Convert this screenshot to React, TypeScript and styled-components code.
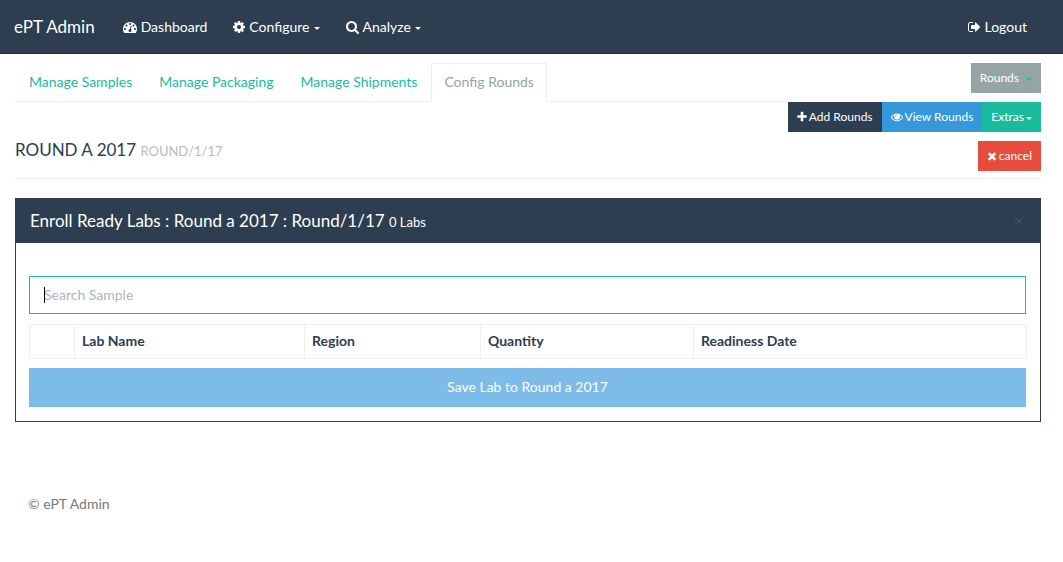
import React from "react";
import styled, { createGlobalStyle } from "styled-components";

const navy = "#2c3e50";
const teal = "#18bc9c";
const line = "#ecf0f1";

const GlobalStyle = createGlobalStyle`
  * { box-sizing: border-box; }
  body {
    margin: 0;
    background: #fff;
    color: ${navy};
    font: 14px/20px Lato, "Liberation Sans", sans-serif;
  }
  button, input { font: inherit; }
`;

const glyphs = {
  dashboard: {
    x: 0, w: 14,
    d: "M384 1152q0-53-37.5-90.5t-90.5-37.5-90.5 37.5-37.5 90.5 37.5 90.5 90.5 37.5 90.5-37.5 37.5-90.5zm192-448q0-53-37.5-90.5t-90.5-37.5-90.5 37.5-37.5 90.5 37.5 90.5 90.5 37.5 90.5-37.5 37.5-90.5zm428 481l101-382q6-26-7.5-48.5t-38.5-29.5-48 6.5-30 39.5l-101 382q-60 5-107 43.5t-63 98.5q-20 77 20 146t117 89 146-20 89-117q16-60-6-117t-72-91zm660-33q0-53-37.5-90.5t-90.5-37.5-90.5 37.5-37.5 90.5 37.5 90.5 90.5 37.5 90.5-37.5 37.5-90.5zm-640-640q0-53-37.5-90.5t-90.5-37.5-90.5 37.5-37.5 90.5 37.5 90.5 90.5 37.5 90.5-37.5 37.5-90.5zm448 192q0-53-37.5-90.5t-90.5-37.5-90.5 37.5-37.5 90.5 37.5 90.5 90.5 37.5 90.5-37.5 37.5-90.5zm320 448q0 261-141 483-19 29-54 29h-1402q-35 0-54-29-141-221-141-483 0-182 71-348t191-286 286-191 348-71 348 71 286 191 191 286 71 348z",
  },
  cog: {
    x: 128, w: 12,
    d: "M1152 896q0-106-75-181t-181-75-181 75-75 181 75 181 181 75 181-75 75-181zm512-109v222q0 12-8 23t-20 13l-185 28q-19 54-39 91 35 50 107 138 10 12 10 25t-9 23q-27 37-99 108t-94 71q-12 0-26-9l-138-108q-44 23-91 38-16 136-29 186-7 28-36 28h-222q-14 0-24.5-8.5t-11.5-21.5l-28-184q-49-16-90-37l-141 107q-10 9-25 9-14 0-25-11-126-114-165-168-7-10-7-23 0-12 8-23 15-21 51-66.5t54-70.5q-27-50-41-99l-183-27q-13-2-21-12.5t-8-23.5v-222q0-12 8-23t19-13l186-28q14-46 39-92-40-57-107-138-10-12-10-24 0-10 9-23 26-36 98.5-107.5t94.5-71.5q13 0 26 10l138 107q44-23 91-38 16-136 29-186 7-28 36-28h222q14 0 24.5 8.5t11.5 21.5l28 184q49 16 90 37l142-107q9-9 24-9 13 0 25 10 129 119 165 170 7 8 7 22 0 12-8 23-15 21-51 66.5t-54 70.5q26 50 41 98l183 28q13 2 21 12.5t8 23.5z",
  },
  search: {
    x: 64, w: 13,
    d: "M1216 832q0-185-131.5-316.5t-316.5-131.5-316.5 131.5-131.5 316.5 131.5 316.5 316.5 131.5 316.5-131.5 131.5-316.5zm512 832q0 52-38 90t-90 38q-54 0-90-38l-343-342q-179 124-399 124-143 0-273.5-55.5t-225-150-150-225-55.5-273.5 55.5-273.5 150-225 225-150 273.5-55.5 273.5 55.5 225 150 150 225 55.5 273.5q0 220-124 399l343 343q37 37 37 90z",
  },
  signOut: {
    x: 64, w: 13,
    d: "M704 1440q0 4 1 20t.5 26.5-3 23.5-10 19.5-20.5 6.5h-320q-119 0-203.5-84.5t-84.5-203.5v-704q0-119 84.5-203.5t203.5-84.5h320q13 0 22.5 9.5t9.5 22.5q0 4 1 20t.5 26.5-3 23.5-10 19.5-20.5 6.5h-320q-66 0-113 47t-47 113v704q0 66 47 113t113 47h312l11.5 1 11.5 3 8 5.5 7 9 2 13.5zm928-544q0 26-19 45l-544 544q-19 19-45 19t-45-19-19-45v-288h-448q-26 0-45-19t-19-45v-384q0-26 19-45t45-19h448v-288q0-26 19-45t45-19 45 19l544 544q19 19 19 45z",
  },
  plus: {
    x: 192, w: 11,
    d: "M1600 736v192q0 40-28 68t-68 28h-416v416q0 40-28 68t-68 28h-192q-40 0-68-28t-28-68v-416h-416q-40 0-68-28t-28-68v-192q0-40 28-68t68-28h416v-416q0-40 28-68t68-28h192q40 0 68 28t28 68v416h416q40 0 68 28t28 68z",
  },
  eye: {
    x: 0, w: 14,
    d: "M1664 960q-152-236-381-353 61 104 61 225 0 185-131.5 316.5t-316.5 131.5-316.5-131.5-131.5-316.5q0-121 61-225-229 117-381 353 133 205 333.5 326.5t434.5 121.5 434.5-121.5 333.5-326.5zm-720-384q0-20-14-34t-34-14q-125 0-214.5 89.5t-89.5 214.5q0 20 14 34t34 14 34-14 14-34q0-86 61-147t147-61q20 0 34-14t14-34zm848 384q0 34-20 69-140 230-376.5 368.5t-499.5 138.5-499.5-139-376.5-368q-20-35-20-69t20-69q140-229 376.5-368t499.5-139 499.5 139 376.5 368q20 35 20 69z",
  },
  times: {
    x: 192, w: 11,
    d: "M1490 1322q0 40-28 68l-136 136q-28 28-68 28t-68-28l-294-294-294 294q-28 28-68 28t-68-28l-136-136q-28-28-28-68t28-68l294-294-294-294q-28-28-28-68t28-68l136-136q28-28 68-28t68 28l294 294 294-294q28-28 68-28t68 28l136 136q28 28 28 68t-28 68l-294 294 294 294q28 28 28 68z",
  },
};

function Glyph({ name, size = 14 }: { name: keyof typeof glyphs; size?: number }) {
  const g = glyphs[name];
  return (
    <svg
      width={Math.ceil((g.w * size) / 14)}
      height={size}
      viewBox={`${g.x} 0 ${g.w * 128} 1792`}
      fill="currentColor"
      aria-hidden="true"
    >
      <path d={g.d} />
    </svg>
  );
}

const Caret = styled.span<{ $color?: string }>`
  border-top: 3px solid ${(p) => p.$color ?? "currentColor"};
  border-left: 3px solid transparent;
  border-right: 3px solid transparent;
  margin-top: 3px;
`;

const Navbar = styled.header`
  display: flex;
  align-items: center;
  height: 54px;
  padding: 0 36px 0 14px;
  background: ${navy};
  border-bottom: 1px solid #202d3b;
  color: #fff;
`;

const Brand = styled.a`
  color: inherit;
  text-decoration: none;
  font-size: 17px;
  margin-right: 28px;
`;

const Menu = styled.nav`
  display: flex;
  flex: 1;
  gap: 26px;
  a:last-child { margin-left: auto; }
`;

const NavLink = styled.a<{ $gap?: number }>`
  display: flex;
  align-items: center;
  gap: ${(p) => p.$gap ?? 4}px;
  color: inherit;
  text-decoration: none;
`;

const Page = styled.main`
  padding: 9px 22px 0 15px;
`;

const TopRow = styled.div`
  display: flex;
  align-items: flex-start;
`;

const Tabs = styled.nav`
  display: flex;
  flex: 1;
  gap: 1px;
  border-bottom: 1px solid ${line};
`;

const Tab = styled.a<{ $active?: boolean }>`
  margin-bottom: -1px;
  padding: 8px 12px 9px;
  border: 1px solid ${(p) => (p.$active ? line : "transparent")};
  border-bottom-color: ${(p) => (p.$active ? "#fff" : "transparent")};
  color: ${(p) => (p.$active ? "#95a5a6" : teal)};
  text-decoration: none;
  &:first-child { padding-left: 13px; }
`;

const Button = styled.button<{ $bg: string; $gap?: number }>`
  display: flex;
  align-items: center;
  gap: ${(p) => p.$gap ?? 2}px;
  height: 30px;
  padding: 0 9px;
  border: 0;
  background: ${(p) => p.$bg};
  color: #fff;
  font-size: 12px;
`;

const ActionColumn = styled.div`
  display: flex;
  flex-direction: column;
  align-items: flex-end;
  gap: 9px;
`;

const ButtonGroup = styled.div`
  display: flex;
`;

const TitleRow = styled.div`
  display: flex;
  justify-content: space-between;
  align-items: flex-start;
  margin-bottom: 19px;
  padding: 9px 0 7px;
  border-bottom: 1px solid ${line};
`;

const Title = styled.h1`
  margin: 0;
  font-size: 17px;
  line-height: 17px;
  font-weight: 400;
  text-transform: uppercase;
  small { font-size: 13px; color: #b4bcc2; }
`;

const Panel = styled.section`
  border: 1px solid ${navy};
`;

const PanelHead = styled.div`
  display: flex;
  align-items: center;
  justify-content: space-between;
  height: 44px;
  padding: 0 14px;
  background: ${navy};
  color: #fff;
`;

const PanelTitle = styled.h2`
  margin: 0;
  font-size: 17px;
  font-weight: 400;
  small { font-size: 13px; }
`;

const Close = styled.button`
  display: flex;
  padding: 0;
  border: 0;
  background: none;
  color: #4b5a69;
`;

const PanelBody = styled.form`
  display: flex;
  flex-direction: column;
  padding: 33px 14px 14px 13px;
`;

const SearchBox = styled.label`
  position: relative;
  display: flex;
  margin-bottom: 10px;
  &::before {
    content: "";
    position: absolute;
    left: 15px;
    top: 11px;
    height: 16px;
    border-left: 1px solid #000;
  }
`;

const SearchInput = styled.input`
  width: 100%;
  height: 38px;
  padding: 0 14px 2px;
  border: 1px solid ${teal};
  border-radius: 0;
  outline: 0;
  color: ${navy};
  caret-color: transparent;
  &::placeholder { color: #acb6c0; opacity: 1; }
`;

const Table = styled.table`
  width: 100%;
  margin-bottom: 9px;
  table-layout: fixed;
  border-collapse: collapse;
  th {
    height: 34px;
    padding: 0 7px 2px;
    border: 1px solid ${line};
    text-align: left;
    font-weight: 700;
  }
`;

const Save = styled.button`
  height: 39px;
  padding: 0 0 2px;
  border: 0;
  background: #7dbbe8;
  color: #fff;
`;

const Footer = styled.footer`
  padding: 72px 28px 0;
  color: #777;
`;

const columns: [string, number][] = [
  ["", 45],
  ["Lab Name", 230],
  ["Region", 176],
  ["Quantity", 213],
  ["Readiness Date", 333],
];

export default function App() {
  return (
    <>
      <GlobalStyle />
      <Navbar>
        <Brand href="#">ePT Admin</Brand>
        <Menu>
          <NavLink href="#"><Glyph name="dashboard" />Dashboard</NavLink>
          <NavLink href="#"><Glyph name="cog" />Configure<Caret /></NavLink>
          <NavLink href="#"><Glyph name="search" />Analyze<Caret /></NavLink>
          <NavLink href="#" $gap={3}><Glyph name="signOut" />Logout</NavLink>
        </Menu>
      </Navbar>
      <Page>
        <TopRow>
          <Tabs>
            <Tab href="#">Manage Samples</Tab>
            <Tab href="#">Manage Packaging</Tab>
            <Tab href="#">Manage Shipments</Tab>
            <Tab href="#" $active>Config Rounds</Tab>
          </Tabs>
          <ActionColumn>
            <Button type="button" $bg="#95a5a6" $gap={7}>Rounds<Caret $color={teal} /></Button>
            <ButtonGroup>
              <Button type="button" $bg={navy}><Glyph name="plus" size={12} />Add Rounds</Button>
              <Button type="button" $bg="#3498db"><Glyph name="eye" size={12} />View Rounds</Button>
              <Button type="button" $bg={teal}>Extras<Caret /></Button>
            </ButtonGroup>
          </ActionColumn>
        </TopRow>
        <TitleRow>
          <Title>Round a 2017 <small>Round/1/17</small></Title>
          <Button type="button" $bg="#e74c3c"><Glyph name="times" size={12} />cancel</Button>
        </TitleRow>
        <Panel>
          <PanelHead>
            <PanelTitle>Enroll Ready Labs : Round a 2017 : Round/1/17 <small>0 Labs</small></PanelTitle>
            <Close type="button" aria-label="Close">
              <svg width="14" height="14" viewBox="0 0 14 14" stroke="currentColor" fill="none">
                <path d="M2.5 3l9 8M11.5 3l-9 8" />
              </svg>
            </Close>
          </PanelHead>
          <PanelBody>
            <SearchBox>
              <SearchInput type="text" placeholder="Search Sample" aria-label="Search Sample" />
            </SearchBox>
            <Table>
              <colgroup>
                {columns.map(([name, width]) => <col key={name} width={width} />)}
              </colgroup>
              <thead>
                <tr>{columns.map(([name]) => <th key={name} scope="col">{name}</th>)}</tr>
              </thead>
            </Table>
            <Save type="button">Save Lab to Round a 2017</Save>
          </PanelBody>
        </Panel>
      </Page>
      <Footer>© ePT Admin</Footer>
    </>
  );
}
